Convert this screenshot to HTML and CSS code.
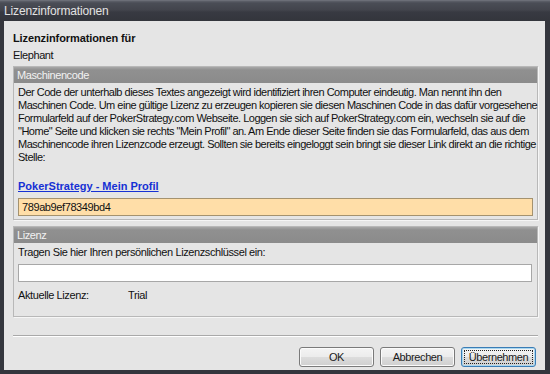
FILE: index.html
```html
<!DOCTYPE html>
<html>
<head>
<meta charset="utf-8">
<link rel="stylesheet" href="styles.css">
</head>
<body>
<div class="window">
  <div class="titlebar">Lizenzinformationen</div>
  <div class="client">
    <div class="heading">Lizenzinformationen für</div>
    <div class="name">Elephant</div>

    <div class="group group-code">
      <div class="group-header">Maschinencode</div>
      <div class="group-body">
        <p class="desc">Der Code der unterhalb dieses Textes angezeigt wird identifiziert ihren Computer eindeutig. Man nennt ihn den<br>Maschinen Code. Um eine gültige Lizenz zu erzeugen kopieren sie diesen Maschinen Code in das dafür vorgesehene<br>Formularfeld auf der PokerStrategy.com Webseite. Loggen sie sich auf PokerStrategy.com ein, wechseln sie auf die<br>"Home" Seite und klicken sie rechts "Mein Profil" an. Am Ende dieser Seite finden sie das Formularfeld, das aus dem<br>Maschinencode ihren Lizenzcode erzeugt. Sollten sie bereits eingeloggt sein bringt sie dieser Link direkt an die richtige<br>Stelle:</p>
        <a class="link" href="#">PokerStrategy - Mein Profil</a>
        <div class="field field-code">789ab9ef78349bd4</div>
      </div>
    </div>

    <div class="group group-license">
      <div class="group-header">Lizenz</div>
      <div class="group-body">
        <div class="prompt">Tragen Sie hier Ihren persönlichen Lizenzschlüssel ein:</div>
        <div class="field field-key"></div>
        <div class="current"><span class="current-label">Aktuelle Lizenz:</span><span>Trial</span></div>
      </div>
    </div>

    <div class="separator"></div>
    <div class="buttons">
      <div class="btn">OK</div>
      <div class="btn">Abbrechen</div>
      <div class="btn btn-default">Übernehmen</div>
    </div>
  </div>
</div>
</body>
</html>
```
FILE: styles.css
```css
* { box-sizing: border-box; }
html, body { margin: 0; padding: 0; }
body {
  background: #383a41;
  font-family: "Liberation Sans", Arial, sans-serif;
  font-size: 11px;
  letter-spacing: -0.4px;
  color: #111;
}
.window {
  width: 550px;
  height: 374px;
  display: flex;
  flex-direction: column;
  background: #34363d;
}
.titlebar {
  height: 21px;
  flex: none;
  padding: 0 0 0 4px;
  line-height: 21px;
  font-size: 12px;
  letter-spacing: -0.15px;
  color: #e2e2e2;
  background: linear-gradient(#5e616a 0, #4a4d56 2px, #42444c 45%, #383a42 55%, #33353c 100%);
  border-top: 1px solid #6b6e77;
}
.client {
  flex: 1;
  margin: 0 5px 4px 4px;
  background: #e5e5e5;
  padding: 11px 7px 0 9px;
  display: flex;
  flex-direction: column;
}
.heading {
  font-weight: bold;
  line-height: 13px;
  letter-spacing: -0.1px;
}
.name {
  margin-top: 4px;
  line-height: 13px;
}
.group {
  border: 1px solid #b8b8b8;
  box-shadow: 1px 1px 0 #f6f6f6;
  margin-top: 4px;
}
.group-license { margin-top: 6px; }
.group-header {
  height: 16px;
  line-height: 16px;
  padding-left: 3px;
  color: #f2f2f2;
  background: linear-gradient(#a8a8a8 0, #909090 3px, #8b8b8b 100%);
}
.group-body {
  padding: 3px 3px 3px 4px;
}
.desc {
  margin: 0;
  line-height: 13px;
  letter-spacing: -0.5px;
  white-space: nowrap;
}
.link {
  display: block;
  margin-top: 16px;
  line-height: 13px;
  font-weight: bold;
  letter-spacing: 0;
  color: #1631d4;
  text-decoration: underline;
}
.field {
  height: 18px;
  margin-top: 5px;
  margin-right: 1px;
  line-height: 16px;
  padding-left: 3px;
}
.field-code {
  background: #ffdea8;
  border: 1px solid #a4926f;
}
.group-license .group-body {
  padding: 3px 4px 14px 4px;
}
.prompt {
  line-height: 13px;
}
.field-key {
  margin-top: 5px;
  background: #ffffff;
  border: 1px solid #a7a7a7;
}
.current {
  margin-top: 7px;
  line-height: 13px;
  display: flex;
}
.current-label {
  width: 110px;
}
.separator {
  margin-top: 18px;
  border-top: 1px solid #a9a9a9;
  border-bottom: 1px solid #ffffff;
}
.buttons {
  margin-top: 10px;
  display: flex;
  justify-content: flex-end;
  gap: 6px;
  padding-right: 2px;
}
.btn {
  width: 75px;
  height: 20px;
  line-height: 18px;
  text-align: center;
  color: #1a1a1a;
  border: 1px solid #7a7a7a;
  border-radius: 3px;
  background: linear-gradient(#f4f4f4 0%, #ececec 48%, #dcdcdc 52%, #cfcfcf 100%);
  box-shadow: inset 0 0 0 1px #fbfbfb;
}
.btn-default {
  border-color: #3a7cb5;
  box-shadow: inset 0 0 0 1px #a9d7f0;
  outline: 1px dotted #222;
  outline-offset: -4px;
}
```
